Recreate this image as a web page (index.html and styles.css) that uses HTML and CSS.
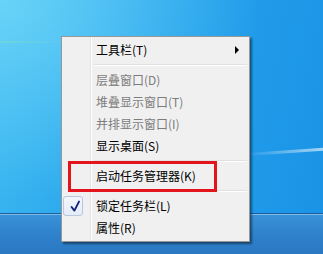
FILE: index.html
```html
<!DOCTYPE html>
<html lang="zh-CN">
<head>
<meta charset="utf-8">
<link rel="stylesheet" href="styles.css">
</head>
<body>
<div class="screen">
  <div class="desktop">
    <div class="streak streak-a"></div>
    <div class="streak streak-b"></div>
  </div>
  <div class="taskbar"></div>

  <div class="menu">
    <div class="item"><span class="gut"></span><span class="label">工具栏(T)</span><span class="arrow"></span></div>
    <div class="sep"></div>
    <div class="item disabled"><span class="gut"></span><span class="label">层叠窗口(D)</span></div>
    <div class="item disabled"><span class="gut"></span><span class="label">堆叠显示窗口(T)</span></div>
    <div class="item disabled"><span class="gut"></span><span class="label">并排显示窗口(I)</span></div>
    <div class="item"><span class="gut"></span><span class="label">显示桌面(S)</span></div>
    <div class="sep"></div>
    <div class="item"><span class="gut"></span><span class="label">启动任务管理器(K)</span></div>
    <div class="sep"></div>
    <div class="item"><span class="gut"><span class="checkbox"><svg width="20" height="20" viewBox="0 0 20 20"><path d="M8.6 11 L11.4 14.6 L16 5.6" fill="none" stroke="#14247e" stroke-width="1.9" stroke-linecap="round" stroke-linejoin="round"/></svg></span></span><span class="label">锁定任务栏(L)</span></div>
    <div class="item"><span class="gut"></span><span class="label">属性(R)</span></div>
  </div>

  <div class="highlight"></div>
</div>
</body>
</html>
```
FILE: styles.css
```css
html, body {
  margin: 0;
  padding: 0;
}
body {
  width: 323px;
  height: 254px;
  overflow: hidden;
  font-family: "Noto Sans CJK SC", "Noto Sans", sans-serif;
}
.screen {
  position: relative;
  width: 323px;
  height: 254px;
  display: flex;
  flex-direction: column;
}
.desktop {
  flex: 1;
  position: relative;
  overflow: hidden;
  background:
    radial-gradient(ellipse 260px 200px at 0px 0px, rgba(120, 220, 250, 0.75), rgba(120, 220, 250, 0) 100%),
    linear-gradient(100deg, #3cb8f0 0%, #27a3ec 45%, #1a93e6 100%);
}
.streak {
  position: absolute;
  height: 2px;
  border-radius: 2px;
}
.streak-a {
  left: 0;
  top: 41px;
  width: 70px;
  background: linear-gradient(to right, rgba(140, 230, 170, 0.35), rgba(140, 230, 170, 0));
}
.streak-b {
  left: 245px;
  top: 150px;
  width: 90px;
  height: 3px;
  transform: rotate(-4deg);
  background: linear-gradient(to right, rgba(255, 255, 255, 0), rgba(255, 255, 255, 0.7));
}
.taskbar {
  height: 40px;
  flex: none;
  border-top: 1px solid #1f5f9f;
  box-shadow: inset 0 1px 0 rgba(170, 215, 245, 0.6);
  background: linear-gradient(to bottom, #3a92d8 0%, #2f82cc 50%, #2a77c2 100%);
}
.menu {
  position: absolute;
  left: 61px;
  top: 36px;
  width: 183px;
  padding: 2px;
  border: 1px solid #979797;
  background-color: #f0f0f0;
  background-image: linear-gradient(to right, transparent 28px, #e2e3e3 28px, #e2e3e3 29px, #ffffff 29px, #ffffff 30px, transparent 30px);
  box-shadow: 2px 2px 2px rgba(0, 0, 0, 0.45);
  font-size: 12px;
  color: #000;
}
.item {
  height: 22px;
  display: flex;
  align-items: center;
  padding-right: 8px;
}
.gut {
  width: 28px;
  height: 22px;
  flex: none;
  display: flex;
  align-items: center;
  justify-content: flex-start;
}
.label {
  flex: 1;
  margin-left: 4px;
  line-height: 22px;
  white-space: nowrap;
}
.disabled .label {
  color: #7c7c7c;
}
.arrow {
  width: 0;
  height: 0;
  border-top: 4px solid transparent;
  border-bottom: 4px solid transparent;
  border-left: 4px solid #000;
}
.sep {
  height: 8px;
  margin-left: 30px;
  margin-right: 0;
  background: linear-gradient(to bottom, transparent 3px, #e0e0e0 3px, #e0e0e0 4px, #ffffff 4px, #ffffff 5px, transparent 5px);
}
.checkbox {
  width: 20px;
  height: 20px;
  box-sizing: border-box;
  margin-left: -1px;
  border: 1px solid #b9c6dc;
  border-radius: 3px;
  background: linear-gradient(to bottom, #f3f7fd, #e4ecf8);
  display: block;
  position: relative;
}
.checkbox svg {
  position: absolute;
  left: -1px;
  top: -1px;
}
.highlight {
  position: absolute;
  left: 68px;
  top: 161px;
  width: 143px;
  height: 25px;
  border: 3px solid #e3141c;
}
```
